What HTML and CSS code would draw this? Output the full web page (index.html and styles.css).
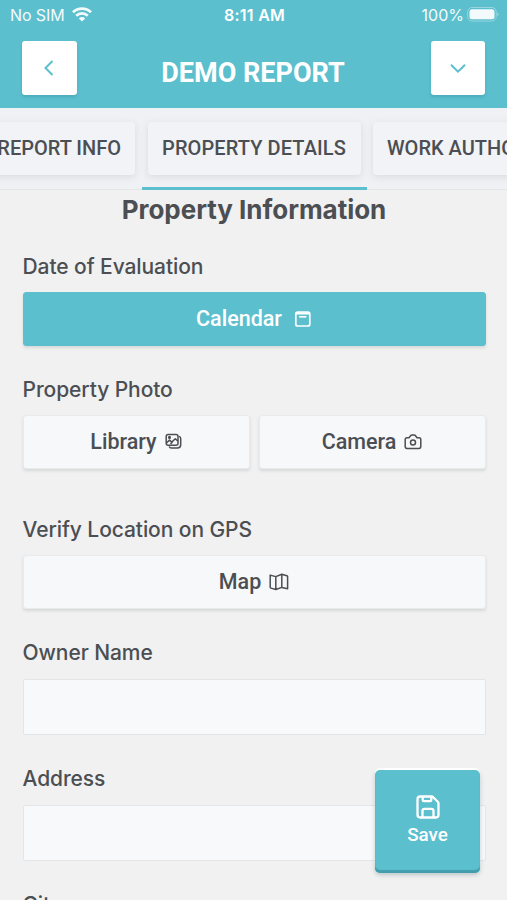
FILE: index.html
```html
<!DOCTYPE html>
<html lang="en">
<head>
<meta charset="utf-8">
<title>Demo Report</title>
<link rel="stylesheet" href="styles.css">
</head>
<body>
<div class="app">
  <header class="header">
    <div class="status">
      <div class="carrier"><span class="carrier-name">No SIM</span>
        <svg class="wifi" width="20" height="15" viewBox="0 0 20 15" fill="none" stroke="currentColor" stroke-width="2.7"><path d="M1 5.3C6 .5 14 .5 19 5.3M4.2 8.7c3.4-3.2 8.2-3.2 11.6 0"/><path d="M6.8 11.4c1.9-1.8 4.5-1.8 6.4 0L10 14.6z" fill="currentColor" stroke="none"/></svg>
      </div>
      <span class="clock">8:11 AM</span>
      <div class="power"><span class="percent">100%</span>
        <svg width="32" height="16" viewBox="0 0 32 16"><rect x=".7" y=".5" width="28.5" height="13.500" rx="4.2" fill="none" stroke="#fff" stroke-opacity=".4"/><rect x="2.5" y="2.300" width="25" height="10" rx="2.5" fill="#fff"/><path d="M30.4 5.200q2.2 2 0 4z" fill="#fff" fill-opacity=".5"/></svg>
      </div>
    </div>
    <div class="toolbar">
      <button class="square" aria-label="Back"><svg width="24" height="24" viewBox="0 0 24 24"><path d="m15.500 5-7 7 7 7"/></svg></button>
      <h1 class="title">DEMO REPORT</h1>
      <button class="square" aria-label="Sections"><svg width="24" height="24" viewBox="0 0 24 24"><path d="m5 8.700 7 7 7-7"/></svg></button>
    </div>
  </header>
  <nav class="tabs">
    <div class="tab tab-info"><span class="tab-card">REPORT INFO</span></div>
    <div class="tab tab-details active"><span class="tab-card">PROPERTY DETAILS</span></div>
    <div class="tab tab-work"><span class="tab-card">WORK AUTHORIZATION</span></div>
  </nav>
  <main class="form">
    <h2 class="heading">Property Information</h2>
    <section class="field date">
      <div class="label">Date of Evaluation</div>
      <button class="button primary"><span>Calendar</span>
        <svg class="icon-cal" width="18" height="18" viewBox="0 0 18 18"><rect x="1.800" y="2" width="14" height="14" rx="2" stroke-width="1.700"/><path d="M2 3.400h13.600" stroke-width="2.200"/><path d="M5.200 6.800h7.200" stroke-width="1.700"/></svg>
      </button>
    </section>
    <section class="field photo">
      <div class="label">Property Photo</div>
      <div class="pair">
        <button class="button"><span>Library</span>
          <svg class="icon-lib" width="17" height="17" viewBox="0 0 17 17"><rect x="1.2" y="1.5" width="11.800" height="10.800" rx="2"/><path d="M14 3.400c1.200.4 1.700 1.200 1.700 2.200v6.200q0 3.200-3.200 3.200H6.300c-1.200 0-1.800-.5-2.100-1.400M1.500 10l3-3 2.200 2.100 3.600-3.300L13 8.200M5.500 11l2-2"/><circle cx="4.500" cy="4.400" r=".8"/></svg>
        </button>
        <button class="button"><span>Camera</span>
          <svg class="icon-cam" width="18" height="16" viewBox="0 0 18 16"><path d="M3 3.800h2l1.600-2c.4-.5.7-.7 1.300-.7h2.300c.6 0 .9.2 1.300.7l1.500 2h2q1.800 0 1.800 1.800v7q0 1.800-1.800 1.800H3q-1.800 0-1.800-1.800v-7Q1.200 3.800 3 3.800z"/><circle cx="9" cy="8.500" r="2.500"/></svg>
        </button>
      </div>
    </section>
    <section class="field gps">
      <div class="label">Verify Location on GPS</div>
      <button class="button"><span>Map</span>
        <svg class="icon-map" width="20" height="18" viewBox="0 0 20 18"><path d="M1.200 2.100 6.800 3.600 12.800 1.300l5.100 1.400q.7.200.7.900v12.200l-5.800-1.400-6 2.100-4.900-1.400q-.7-.2-.7-.9zM6.800 3.600v12.900M12.800 1.300v13.100"/></svg>
      </button>
    </section>
    <section class="field"><label class="label" for="owner">Owner Name</label><input id="owner" class="input"></section>
    <section class="field"><label class="label" for="address">Address</label><input id="address" class="input"></section>
    <section class="field"><label class="label" for="city">City</label><input id="city" class="input"></section>
  </main>
  <button class="save">
    <svg width="24" height="24" viewBox="0 0 24 24"><path d="M4.200 1.500h11.600q.7 0 1.200.5l5 5q.5.500.5 1.200v11.600q0 2.700-2.700 2.700H4.200q-2.700 0-2.700-2.700V4.200q0-2.700 2.700-2.700zM6.700 1.800V5q0 1.200 1.200 1.200h6.200q1.200 0 1.200-1.200V1.800M6.500 22.300v-6.500q0-2 2-2h7q2 0 2 2v6.500"/></svg>
    <span>Save</span>
  </button>
</div>
</body>
</html>
```
FILE: styles.css
```css
* { box-sizing: border-box; }
body { margin: 0; background: #f1f1f1; color: #4b4e52; }
button { margin: 0; padding: 0; border: 0; font: inherit; color: inherit; }
svg { display: block; flex: none; }
.app { position: relative; width: 507px; height: 900px; overflow: hidden; font-family: Inter, sans-serif; white-space: nowrap; }
.header { height: 108px; background: #5bbfce; color: #fff; }
.status { display: grid; grid-template-columns: 1fr auto 1fr; align-items: center; height: 30px; padding: 0 8px 0 10px; font-size: 16px; line-height: 20px; }
.carrier, .power { display: flex; align-items: center; opacity: .93; }
.carrier { gap: 7px; }
.carrier-name { letter-spacing: -.1px; }
.wifi { margin-top: -2px; }
.power { justify-content: flex-end; gap: 3px; }
.clock { font-weight: 600; letter-spacing: .25px; }
.toolbar { display: flex; justify-content: space-between; align-items: flex-start; padding: 11px 21.5px 0 22px; }
.square { display: flex; justify-content: center; align-items: center; width: 54.5px; height: 54px; background: #fff; border-radius: 3px; box-shadow: 0 2px 3px #28788445; }
.square svg { fill: none; stroke: #5bbfce; stroke-width: 2; }
.title { margin: 12px 0 0; font: 700 27px/40px Roboto, sans-serif; transform: translateX(-.7px); }
.tabs { display: flex; height: 82px; background: #f0f1f4; border-bottom: 1px solid #e4e6e8; }
.tab { flex: none; padding: 14px 6px 0; }
.tab-info { width: 142px; }
.tab-details { width: 225px; }
.tab-work { width: 260px; }
.active { border-bottom: 3px solid #5bbfce; height: 82px; }
.tab-card { display: flex; justify-content: center; align-items: center; height: 53px; padding-bottom: 2px; border-radius: 4px; background: #f1f3f7; box-shadow: 0 2px 7px #989da740; font: 500 20px/24px Roboto, sans-serif; }
.tab-info .tab-card { margin-left: -26px; margin-right: 1px; justify-content: flex-end; padding-right: 14px; }
.tab-details .tab-card { letter-spacing: .1px; padding-right: 1px; }
.tab-work .tab-card { justify-content: flex-start; padding-left: 14px; }
.form { padding: 0 21.5px 0 22.5px; }
.heading { margin: 0; height: 59px; padding-top: 4px; text-align: center; font-size: 26px; line-height: 32px; font-weight: 700; letter-spacing: -.03px; }
.field { height: 126px; }
.date, .gps { height: 123px; }
.photo { height: 140px; }
.label { display: block; height: 43px; padding-top: 6px; font-size: 21px; line-height: 24px; font-weight: 500; letter-spacing: -.08px; }
.button { display: flex; align-items: center; justify-content: center; width: 100%; height: 54px; border-radius: 3px; background: #f7f8fa; border: 1px solid #e8eaec; box-shadow: 0 2px 3px #8a8e9240; font: 500 21.5px/26px Roboto, sans-serif; }
.button svg { fill: none; stroke: currentColor; stroke-width: 1.5; stroke-linejoin: round; margin-left: 8px; }
.button .icon-cal { margin-left: 12px; }
.primary { background: #5bbfce; color: #fff; border-color: #5bbfce; }
.pair { display: grid; grid-template-columns: 1fr 1fr; gap: 9px; }
.pair .button { padding-bottom: 1px; }
.input { display: block; width: 100%; height: 56px; border: 1px solid #e3e6e8; border-radius: 2px; background: #f7f9fb; }
.field .input { margin-top: .5px; }
.save { position: absolute; left: 375px; top: 770px; width: 105px; height: 103px; padding-bottom: 1px; display: flex; flex-direction: column; align-items: center; justify-content: center; gap: 3px; border-radius: 5px; background: #5bbfce; color: #fff; box-shadow: inset 0 -3px 1px #429eac, 0 -2px 1px #fff, 0 2px 4px #6e848b66; font: 500 18.800px/26px Roboto, sans-serif; }
.save svg { fill: none; stroke: currentColor; stroke-width: 2.3; stroke-linejoin: round; }
```
